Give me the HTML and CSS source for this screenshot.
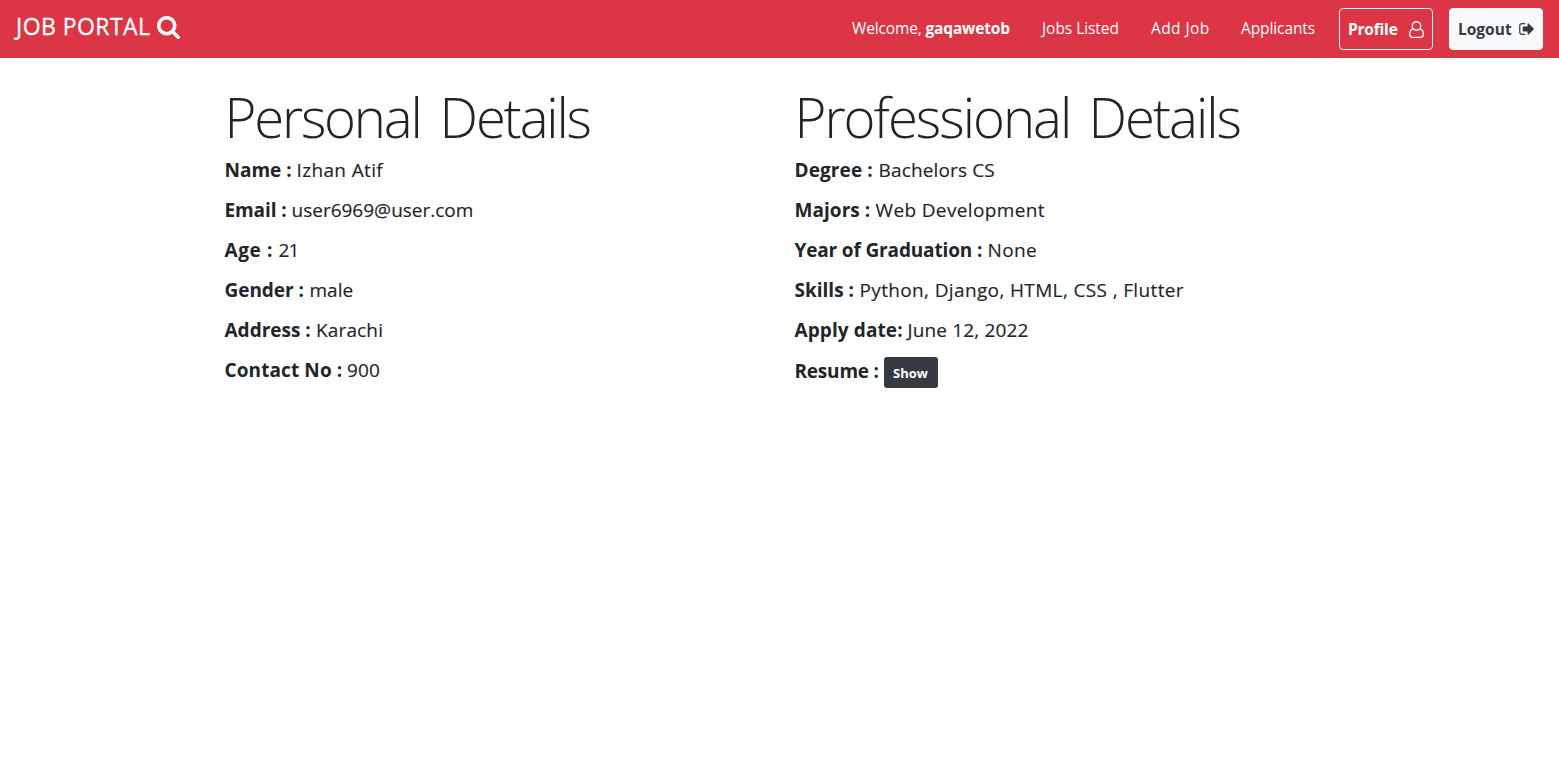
FILE: index.html
```html
<!DOCTYPE html>
<html lang="en">
<head>
<meta charset="utf-8">
<title>Job Portal</title>
<link rel="stylesheet" href="styles.css">
</head>
<body>
<nav class="navbar">
  <a class="brand"><span class="brand-text">JOB PORTAL</span><svg class="icon-search" viewBox="64 128 1664 1664"><path d="M1216 832q0-185-131.500-316.500t-316.500-131.500-316.500 131.500-131.500 316.500 131.500 316.500 316.500 131.500 316.500-131.500 131.500-316.500zm512 832q0 52-38 90t-90 38q-54 0-90-38l-343-342q-179 124-399 124-143 0-273.500-55.500t-225-150-150-225-55.500-273.500 55.500-273.500 150-225 225-150 273.500-55.500 273.500 55.500 225 150 150 225 55.500 273.500q0 220-124 399l343 343q37 37 37 90z"/></svg></a>
  <div class="links">
    <a class="link welcome">Welcome, <b class="user">gaqawetob</b></a>
    <a class="link jobs">Jobs Listed</a>
    <a class="link add">Add Job</a>
    <a class="link applicants">Applicants</a>
    <a class="btn profile"><span class="profile-text">Profile</span><svg class="icon-user" viewBox="0 0 15 17"><circle cx="7.500" cy="5" r="4.250"/><path d="M4 7.800C1.700 8.300.7 10.500.7 13.200c0 1.900 1.100 3.100 2.700 3.100h8.200c1.600 0 2.700-1.200 2.700-3.100 0-2.700-1-4.900-3.300-5.400"/></svg></a>
    <a class="btn logout"><span class="logout-text">Logout</span><svg class="icon-out" viewBox="64 256 1568 1280"><path d="M704 1440q0 4 1 20t.5 26.500-3 23.500-10 19.500-20.500 6.500h-320q-119 0-203.500-84.500t-84.500-203.500v-704q0-119 84.500-203.500t203.500-84.500h320q13 0 22.500 9.500t9.500 22.500q0 4 1 20t.5 26.500-3 23.500-10 19.500-20.500 6.500h-320q-66 0-113 47t-47 113v704q0 66 47 113t113 47h312l11.500 1 11.500 3 8 5.500 7 9 2 13.500zm928-544q0 26-19 45l-544 544q-19 19-45 19t-45-19-19-45v-288h-448q-26 0-45-19t-19-45v-384q0-26 19-45t45-19h448v-288q0-26 19-45t45-19 45 19l544 544q19 19 19 45z"/></svg></a>
  </div>
</nav>
<main class="container">
  <section class="col">
    <h1 class="title personal">Personal Details</h1>
    <p class="row"><b class="label name">Name :</b><span class="value wide">Izhan Atif</span></p>
    <p class="row"><b class="label email">Email :</b><span class="value">user6969@user.com</span></p>
    <p class="row"><b class="label age">Age :</b><span class="value tight">21</span></p>
    <p class="row"><b class="label gender">Gender :</b><span class="value">male</span></p>
    <p class="row"><b class="label address">Address :</b><span class="value medium">Karachi</span></p>
    <p class="row"><b class="label contact">Contact No :</b><span class="value medium">900</span></p>
  </section>
  <section class="col">
    <h1 class="title professional">Professional Details</h1>
    <p class="row"><b class="label degree">Degree :</b><span class="value medium">Bachelors CS</span></p>
    <p class="row"><b class="label majors">Majors :</b><span class="value wide">Web Development</span></p>
    <p class="row"><b class="label year">Year of Graduation :</b><span class="value wide">None</span></p>
    <p class="row"><b class="label skills">Skills :</b><span class="value wide">Python, Django, HTML, CSS , Flutter</span></p>
    <p class="row"><b class="label apply">Apply date:</b><span class="value medium">June 12, 2022</span></p>
    <p class="row resume-row"><b class="label resume">Resume :</b><a class="show">Show</a></p>
  </section>
</main>
</body>
</html>
```
FILE: styles.css
```css
* { box-sizing: border-box; }
body { margin: 0; background: #fff; color: #212529; font-family: "Open Sans", "Noto Sans", sans-serif; }
.navbar { display: flex; justify-content: space-between; height: 58px; padding: 8px 16px; background: #dc3545; color: #fff; }
.brand { display: flex; align-items: center; height: 38px; font-size: 23px; font-weight: 500; white-space: nowrap; }
.brand-text { width: 141px; padding-bottom: 2px; letter-spacing: 0.45px; -webkit-text-stroke: 0.3px #fff; }
.icon-search { width: 23px; height: 23px; fill: #fff; }
.links { display: flex; height: 42px; align-items: center; font-size: 15.500px; white-space: nowrap; }
.link { padding-bottom: 2px; }
.welcome { width: 190px; letter-spacing: -0.15px; }
.jobs { width: 109px; letter-spacing: -0.05px; }
.add { width: 90px; letter-spacing: 0.4px; }
.applicants { width: 98px; letter-spacing: -0.1px; }
.user { font-weight: 700; }
.btn { display: flex; align-items: center; width: 94px; height: 42px; border: 1px solid #f8f9fa; border-radius: 4px; padding: 0 8px; font-weight: 700; }
.profile { margin-right: 16px; }
.profile-text { width: 61px; letter-spacing: -0.2px; }
.logout { background: #f8f9fa; color: #343a40; }
.logout-text { width: 61px; letter-spacing: 0; }
.icon-user { width: 15px; height: 17px; fill: none; stroke: #fff; stroke-width: 1.300; }
.icon-out { width: 15px; height: 12px; fill: #343a40; }
.container { display: flex; width: 1140px; margin: 0 auto; padding: 26px 15px 0; }
.col { width: 570px; flex: none; }
.title { margin: 0; height: 67px; line-height: 67px; font-size: 54.500px; font-weight: 300; letter-spacing: -2.2px; word-spacing: 7px; white-space: nowrap; }
.professional { letter-spacing: -2px; word-spacing: 6px; }
.row { display: flex; align-items: center; height: 24px; margin: 7px 0 16px; font-size: 19px; white-space: nowrap; }
.resume-row { margin-top: 17px; }
.label { font-weight: 700; }
.value { -webkit-text-stroke: 0.15px #212529; }
.wide { letter-spacing: 0.36px; }
.medium { letter-spacing: 0.15px; }
.tight { letter-spacing: -0.8px; }
.name { width: 72px; }
.email { width: 67px; letter-spacing: -0.1px; }
.age { width: 54px; letter-spacing: 0.6px; }
.gender { width: 85px; letter-spacing: -0.05px; }
.address { width: 91.500px; }
.contact { width: 122.500px; letter-spacing: 0.1px; }
.degree { width: 84px; letter-spacing: 0.1px; }
.majors { width: 81px; letter-spacing: 0.05px; }
.year { width: 193px; letter-spacing: -0.15px; }
.skills { width: 65px; }
.apply { width: 113px; letter-spacing: 0.1px; }
.resume { width: 89px; letter-spacing: -0.2px; }
.show { display: flex; align-items: center; justify-content: center; width: 54px; height: 31px; margin-top: 3px; padding-top: 1px; border-radius: 3px; background: #343a40; color: #fff; font-size: 13px; font-weight: 700; }
```
